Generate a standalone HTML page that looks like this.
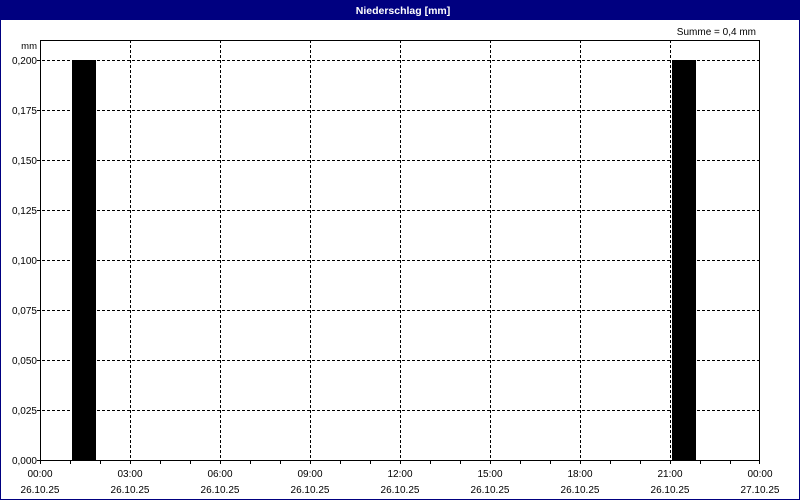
<!DOCTYPE html>
<html><head><meta charset="utf-8"><style>
html,body{margin:0;padding:0;background:#fff;}
body{width:800px;height:500px;overflow:hidden;position:relative;}
</style></head><body>
<svg width="800" height="500" xmlns="http://www.w3.org/2000/svg" style="position:absolute;left:0;top:0" font-family="'Liberation Sans',sans-serif" font-size="10">
<rect x="0" y="0" width="800" height="500" fill="#fff"/>
<rect x="0" y="0" width="800" height="20" fill="#000080"/>
<rect x="0" y="0" width="1" height="500" fill="#000080"/>
<rect x="799" y="0" width="1" height="500" fill="#000080"/>
<rect x="0" y="499" width="800" height="1" fill="#000080"/>
<text x="403" y="14" fill="#fff" font-weight="bold" font-size="10.5" text-anchor="middle">Niederschlag [mm]</text>
<text x="756" y="35" fill="#000" text-anchor="end">Summe = 0,4 mm</text>
<text x="37" y="49" fill="#000" text-anchor="end" font-size="9.5">mm</text>
<g stroke="#000" stroke-width="1" stroke-dasharray="3,2" shape-rendering="crispEdges">
<line x1="37" y1="60.5" x2="760" y2="60.5"/>
<line x1="37" y1="110.5" x2="760" y2="110.5"/>
<line x1="37" y1="160.5" x2="760" y2="160.5"/>
<line x1="37" y1="210.5" x2="760" y2="210.5"/>
<line x1="37" y1="260.5" x2="760" y2="260.5"/>
<line x1="37" y1="310.5" x2="760" y2="310.5"/>
<line x1="37" y1="360.5" x2="760" y2="360.5"/>
<line x1="37" y1="410.5" x2="760" y2="410.5"/>
<line x1="130.5" y1="40" x2="130.5" y2="460"/>
<line x1="220.5" y1="40" x2="220.5" y2="460"/>
<line x1="310.5" y1="40" x2="310.5" y2="460"/>
<line x1="400.5" y1="40" x2="400.5" y2="460"/>
<line x1="490.5" y1="40" x2="490.5" y2="460"/>
<line x1="580.5" y1="40" x2="580.5" y2="460"/>
<line x1="670.5" y1="40" x2="670.5" y2="460"/>
</g>
<rect x="72" y="60" width="24" height="400" fill="#000"/>
<rect x="672" y="60" width="24" height="400" fill="#000"/>
<g stroke="#000" stroke-width="1" fill="none" shape-rendering="crispEdges">
<rect x="40.5" y="40.5" width="719" height="420"/>
<line x1="37" y1="460.5" x2="40" y2="460.5"/>
</g>
<g fill="#000" text-anchor="end">
<text x="37" y="64">0,200</text>
<text x="37" y="114">0,175</text>
<text x="37" y="164">0,150</text>
<text x="37" y="214">0,125</text>
<text x="37" y="264">0,100</text>
<text x="37" y="314">0,075</text>
<text x="37" y="364">0,050</text>
<text x="37" y="414">0,025</text>
<text x="37" y="464">0,000</text>
</g>
<g fill="#000" text-anchor="middle">
<text x="40" y="477">00:00</text><text x="40" y="493">26.10.25</text>
<text x="130" y="477">03:00</text><text x="130" y="493">26.10.25</text>
<text x="220" y="477">06:00</text><text x="220" y="493">26.10.25</text>
<text x="310" y="477">09:00</text><text x="310" y="493">26.10.25</text>
<text x="400" y="477">12:00</text><text x="400" y="493">26.10.25</text>
<text x="490" y="477">15:00</text><text x="490" y="493">26.10.25</text>
<text x="580" y="477">18:00</text><text x="580" y="493">26.10.25</text>
<text x="670" y="477">21:00</text><text x="670" y="493">26.10.25</text>
<text x="760" y="477">00:00</text><text x="760" y="493">27.10.25</text>
</g>
<g stroke="#000" stroke-width="1" shape-rendering="crispEdges">
<line x1="70.5" y1="460" x2="70.5" y2="464"/><line x1="100.5" y1="460" x2="100.5" y2="464"/><line x1="130.5" y1="460" x2="130.5" y2="464"/>
<line x1="160.5" y1="460" x2="160.5" y2="464"/><line x1="190.5" y1="460" x2="190.5" y2="464"/><line x1="220.5" y1="460" x2="220.5" y2="464"/>
<line x1="250.5" y1="460" x2="250.5" y2="464"/><line x1="280.5" y1="460" x2="280.5" y2="464"/><line x1="310.5" y1="460" x2="310.5" y2="464"/>
<line x1="340.5" y1="460" x2="340.5" y2="464"/><line x1="370.5" y1="460" x2="370.5" y2="464"/><line x1="400.5" y1="460" x2="400.5" y2="464"/>
<line x1="430.5" y1="460" x2="430.5" y2="464"/><line x1="460.5" y1="460" x2="460.5" y2="464"/><line x1="490.5" y1="460" x2="490.5" y2="464"/>
<line x1="520.5" y1="460" x2="520.5" y2="464"/><line x1="550.5" y1="460" x2="550.5" y2="464"/><line x1="580.5" y1="460" x2="580.5" y2="464"/>
<line x1="610.5" y1="460" x2="610.5" y2="464"/><line x1="640.5" y1="460" x2="640.5" y2="464"/><line x1="670.5" y1="460" x2="670.5" y2="464"/>
<line x1="700.5" y1="460" x2="700.5" y2="464"/><line x1="730.5" y1="460" x2="730.5" y2="464"/><line x1="759.5" y1="460" x2="759.5" y2="464"/>
<line x1="40.5" y1="460" x2="40.5" y2="464"/>
</g>
</svg>
</body></html>
